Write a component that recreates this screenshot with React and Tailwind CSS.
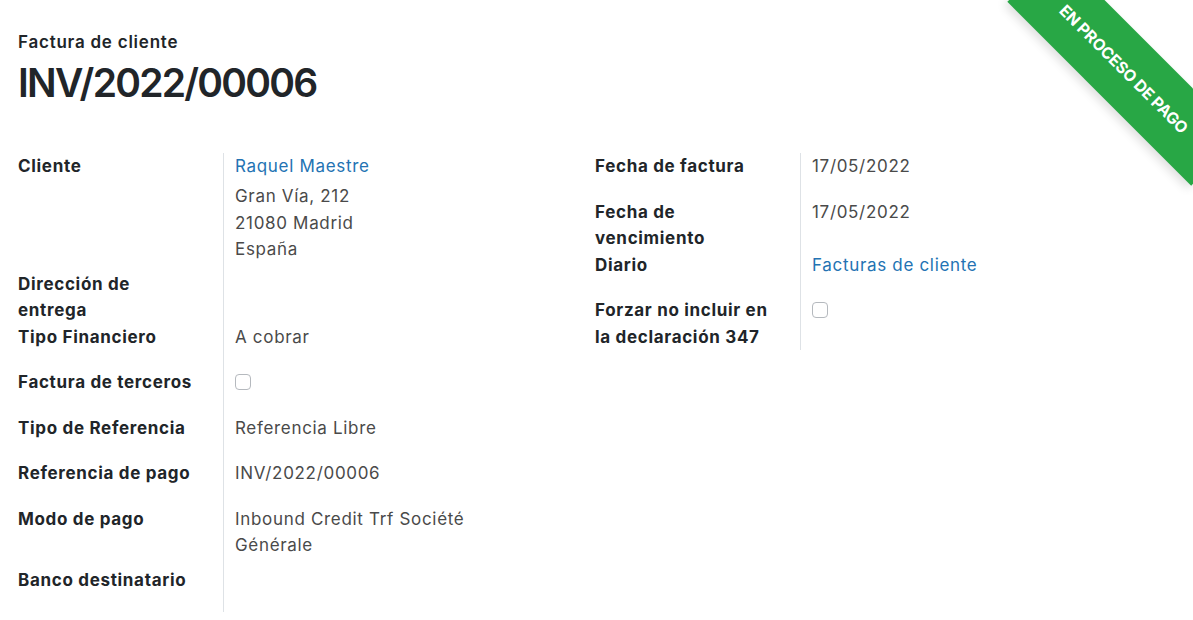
import React from "react";

const labelCls = "w-[206px] shrink-0 border-r border-[#dee2e6] pr-4 font-bold text-[#212529]";
const valueCls = "flex-1 pl-[11px] pb-2 text-[#4a4a4a]";

function Row({ label, children }) {
  return (
    <div className="flex min-h-[45.5px]">
      <div className={labelCls}>{label}</div>
      <div className={valueCls}>{children}</div>
    </div>
  );
}

function Check() {
  return <div className="mt-[5px] h-4 w-4 rounded-[4px] border border-[#b5b9be] bg-white" />;
}

export default function App() {
  return (
    <div
      className="relative h-[620px] w-[1193px] overflow-hidden bg-white text-[17px] leading-[26.5px] tracking-[0.04em]"
      style={{ fontFamily: "Inter, 'Noto Sans', sans-serif" }}
    >
      {/* Ribbon */}
      <div className="absolute right-0 top-0 h-[200px] w-[200px] overflow-hidden">
        <div className="absolute left-[1px] top-[34px] flex h-[70px] w-[260px] rotate-45 items-center justify-center bg-[#28a745] text-[16px] font-bold uppercase tracking-[-0.01em] text-white shadow-[0_5px_10px_rgba(0,0,0,0.12)]">
          En proceso de pago
        </div>
      </div>

      {/* Header */}
      <div className="px-[18px] pt-[29px]">
        <div className="text-[17px] font-semibold leading-[26px] tracking-[0.045em] text-[#212529]">Factura de cliente</div>
        <h1 className="mt-[2px] text-[39px] font-semibold leading-[52px] tracking-[-0.045em] text-[#212529]">INV/2022/00006</h1>
      </div>

      {/* Groups */}
      <div className="mt-[44px] flex pl-[18px]">
        <div className="w-[577px]">
          <Row label="Cliente">
            <div className="text-[#2373b3]">Raquel Maestre</div>
            <div className="mt-[3.5px]">
              <div>Gran Vía, 212</div>
              <div>21080 Madrid</div>
              <div>España</div>
            </div>
          </Row>
          <Row label={<>Dirección de<br />entrega</>} />
          <Row label="Tipo Financiero">A cobrar</Row>
          <Row label="Factura de terceros">
            <Check />
          </Row>
          <Row label="Tipo de Referencia">Referencia Libre</Row>
          <Row label="Referencia de pago">INV/2022/00006</Row>
          <Row label="Modo de pago">
            Inbound Credit Trf Société
            <br />
            Générale
          </Row>
          <Row label="Banco destinatario" />
        </div>

        <div className="w-[577px]">
          <Row label="Fecha de factura">17/05/2022</Row>
          <Row label={<>Fecha de<br />vencimiento</>}>17/05/2022</Row>
          <Row label="Diario">
            <span className="text-[#2373b3]">Facturas de cliente</span>
          </Row>
          <Row label={<>Forzar no incluir en<br />la declaración 347</>}>
            <Check />
          </Row>
        </div>
      </div>
    </div>
  );
}
